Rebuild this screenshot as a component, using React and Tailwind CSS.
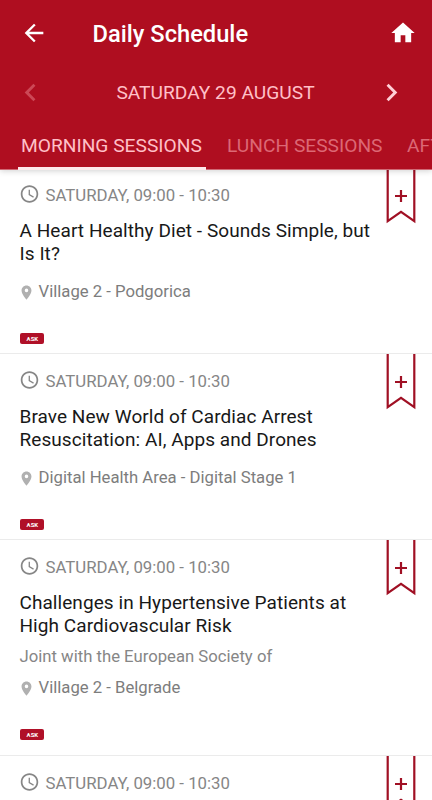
import React from 'react';
import { MdAccessTime, MdArrowBack, MdChevronLeft, MdChevronRight, MdHome, MdPlace } from 'react-icons/md';

const sessions = [
    {
        id: 1,
        time: 'SATURDAY, 09:00 - 10:30',
        lines: ['A Heart Healthy Diet - Sounds Simple, but', 'Is It?'],
        place: 'Village 2 - Podgorica',
    },
    {
        id: 2,
        time: 'SATURDAY, 09:00 - 10:30',
        lines: ['Brave New World of Cardiac Arrest', 'Resuscitation: AI, Apps and Drones'],
        place: 'Digital Health Area - Digital Stage 1',
    },
    {
        id: 3,
        time: 'SATURDAY, 09:00 - 10:30',
        lines: ['Challenges in Hypertensive Patients at', 'High Cardiovascular Risk'],
        note: 'Joint with the European Society of',
        place: 'Village 2 - Belgrade',
    },
    {
        id: 4,
        time: 'SATURDAY, 09:00 - 10:30',
        lines: [],
    },
];

function Bookmark() {
    return (
        <svg className="absolute top-0 left-[386px]" width="30" height="58" viewBox="0 0 30 58" fill="none" stroke="#a01024" strokeWidth="2.2">
            <path d="M1.7 0V53.2L15 43.8L28.3 53.2V0" />
            <path d="M9 28H21M15 22V34" />
        </svg>
    );
}

function Session({ session }) {
    return (
        <article className={`relative border-b border-[#ebebeb] bg-white pl-5 ${session.note ? 'h-[216px]' : 'h-[186px]'}`}>
            <Bookmark />
            <div className="flex h-14 items-center text-[#868686]">
                <MdAccessTime size={21} className="-ml-px shrink-0 -translate-y-[2.5px]" />
                <span className="ml-[5.5px] text-[16.8px] whitespace-nowrap">{session.time}</span>
            </div>
            <h2 className="-mt-[5px] -ml-[0.5px] text-[19px] leading-[23px] tracking-[0.065px] whitespace-nowrap text-[#181818]">
                {session.lines.map(line => (
                    <span key={line} className="block">{line}</span>
                ))}
            </h2>
            {session.note && (
                <p className="mt-[9px] -ml-[0.5px] h-[21px] text-[16.7px] leading-[21px] text-[#868686]">{session.note}</p>
            )}
            {session.place && (
                <>
                    <div className={`flex h-5 items-center text-[16.7px] text-[#7d7d7d] ${session.note ? 'mt-[11px]' : 'mt-[17px]'}`}>
                        <MdPlace size={17} className="-ml-0.5 shrink-0 text-[#b0b0b0]" />
                        <span className="ml-[3.5px] whitespace-nowrap">{session.place}</span>
                    </div>
                    <div className="ml-[0.4px] mt-[31px] flex h-[11px] w-6 items-center justify-center rounded-[2px] bg-[#b01028] text-[6px] leading-none font-bold text-white">
                        ASK
                    </div>
                </>
            )}
        </article>
    );
}

export default function App() {
    return (
        <div className="h-[800px] w-[432px] overflow-hidden bg-white font-[Roboto,sans-serif]">
            <header className="relative z-10 flex h-[170px] flex-col bg-[#af0e20] text-white shadow-[0_1px_6px_rgba(0,0,0,0.18)]">
                <div className="flex h-[66px] items-center">
                    <MdArrowBack size={28} className="ml-5" />
                    <h1 className="mt-[3px] ml-[44.5px] text-[23.7px] font-medium">Daily Schedule</h1>
                    <MdHome size={28} className="mr-[15px] ml-auto" />
                </div>
                <div className="flex h-[52px] items-center justify-between pr-[23px] pl-[13px]">
                    <MdChevronLeft size={35} className="text-[#cc4856]" />
                    <span className="mt-0.5 ml-[9px] text-[19.2px] text-[#ffc0c8]">SATURDAY 29 AUGUST</span>
                    <MdChevronRight size={35} className="text-[#ffd0d7]" />
                </div>
                <nav className="flex h-[52px] overflow-hidden pl-[18px] text-[19.2px] whitespace-nowrap shadow-[inset_0_-1px_0_#d06a75]">
                    <div className="w-[188px] shrink-0 border-b-[3px] border-[#ffe8eb] pl-[3px] leading-[55px] text-[#ffc0c8]">MORNING SESSIONS</div>
                    <div className="w-[180px] shrink-0 pl-[21px] leading-[55px] text-[#dc6875]">LUNCH SESSIONS</div>
                    <div className="shrink-0 pl-[21px] leading-[55px] text-[#dc6875]">AFTERNOON SESSIONS</div>
                </nav>
            </header>
            <main className="-mt-0.5">
                {sessions.map(session => (
                    <Session key={session.id} session={session} />
                ))}
            </main>
        </div>
    );
}
